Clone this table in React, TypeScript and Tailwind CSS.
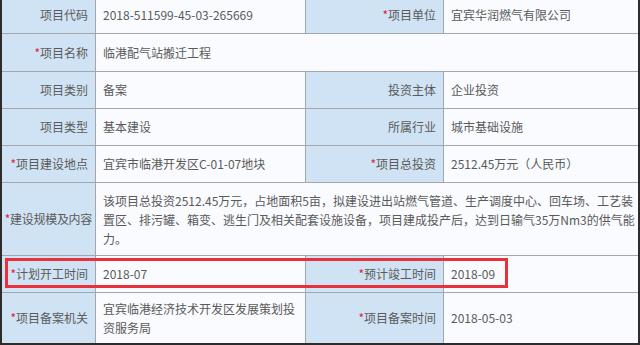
import React from "react";

const labelCls =
  "bg-[#d0e3f4] border-r border-[#a3a7ab] flex items-center justify-end pr-[7px] text-right whitespace-nowrap";
const valueCls = "bg-[#f9fbfe] border-r border-[#a3a7ab] flex items-center pl-[7px]";

function Label({ text, req, tight }: { text: string; req?: boolean; tight?: boolean }) {
  return (
    <div className={labelCls + (tight ? " !pr-[3px] tracking-[-0.3px]" : "")}>
      {req && <span className="text-[#e0203f]">*</span>}
      {text}
    </div>
  );
}

type Row = { h: string; cells: React.ReactNode };

export default function App() {
  const rows: Row[] = [
    {
      h: "h-[38px]",
      cells: (
        <>
          <Label text="项目代码" />
          <div className={valueCls}>2018-511599-45-03-265669</div>
          <Label text="项目单位" req />
          <div className={valueCls + " border-r-0"}>宜宾华润燃气有限公司</div>
        </>
      ),
    },
    {
      h: "h-[38px]",
      cells: (
        <>
          <Label text="项目名称" req />
          <div className={valueCls + " col-span-3 border-r-0"}>临港配气站搬迁工程</div>
        </>
      ),
    },
    {
      h: "h-[37px]",
      cells: (
        <>
          <Label text="项目类别" />
          <div className={valueCls}>备案</div>
          <Label text="投资主体" />
          <div className={valueCls + " border-r-0"}>企业投资</div>
        </>
      ),
    },
    {
      h: "h-[37px]",
      cells: (
        <>
          <Label text="项目类型" />
          <div className={valueCls}>基本建设</div>
          <Label text="所属行业" />
          <div className={valueCls + " border-r-0"}>城市基础设施</div>
        </>
      ),
    },
    {
      h: "h-[37px]",
      cells: (
        <>
          <Label text="项目建设地点" req />
          <div className={valueCls}>宜宾市临港开发区C-01-07地块</div>
          <Label text="项目总投资" req />
          <div className={valueCls + " border-r-0"}>2512.45万元（人民币）</div>
        </>
      ),
    },
    {
      h: "h-[73px]",
      cells: (
        <>
          <Label text="建设规模及内容" req tight />
          <div className={valueCls + " col-span-3 border-r-0 leading-[19px] whitespace-nowrap"}>
            <div>
              该项目总投资2512.45万元，占地面积5亩，拟建设进出站燃气管道、生产调度中心、回车场、工艺装
              <br />
              置区、排污罐、箱变、逃生门及相关配套设施设备，项目建成投产后，达到日输气35万Nm3的供气能
              <br />
              力。
            </div>
          </div>
        </>
      ),
    },
    {
      h: "h-[37px]",
      cells: (
        <>
          <Label text="计划开工时间" req />
          <div className={valueCls}>2018-07</div>
          <Label text="预计竣工时间" req />
          <div className={valueCls + " border-r-0"}>2018-09</div>
        </>
      ),
    },
    {
      h: "h-[50px]",
      cells: (
        <>
          <Label text="项目备案机关" req />
          <div className={valueCls + " leading-[19px]"}>
            <div>
              宜宾临港经济技术开发区发展策划投
              <br />
              资服务局
            </div>
          </div>
          <Label text="项目备案时间" req />
          <div className={valueCls + " border-r-0"}>2018-05-03</div>
        </>
      ),
    },
  ];

  return (
    <div
      className="relative w-[640px] h-[345px] overflow-hidden bg-white text-[12px] text-[#5a5a5a]"
      style={{ fontFamily: '"Noto Sans CJK SC", "Noto Sans", sans-serif' }}
    >
      <div className="-mt-[4px] border-l-2 border-r-2 border-b-2 border-[#2c2c2c]">
        {rows.map((r, i) => (
          <div
            key={i}
            className={"grid grid-cols-[94px_210px_138px_1fr] border-b border-[#a3a7ab] last:border-b-0 " + r.h}
          >
            {r.cells}
          </div>
        ))}
      </div>

      {/* red highlight around planned start / completion row */}
      <div className="absolute left-[5px] top-[258px] w-[503px] h-[30px] border-[3px] border-[#e8313a]" />
    </div>
  );
}
